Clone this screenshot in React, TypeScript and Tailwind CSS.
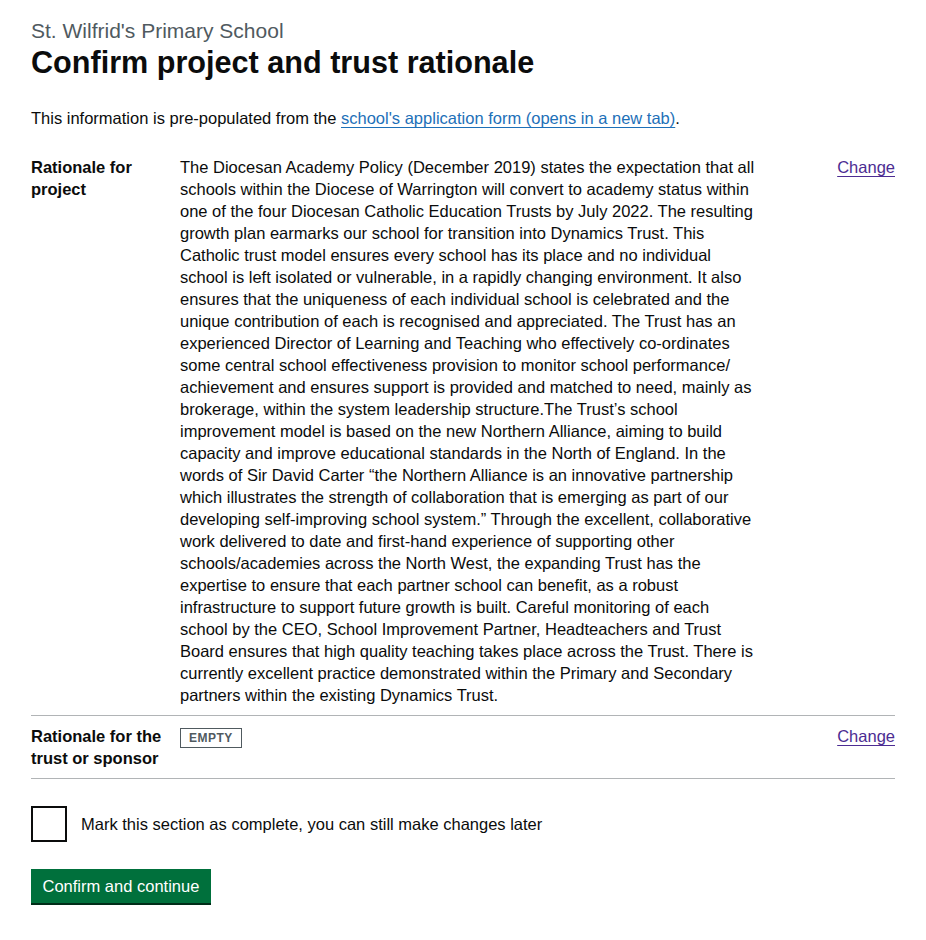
import React from "react";

const lines = [
  "The Diocesan Academy Policy (December 2019) states the expectation that all",
  "schools within the Diocese of Warrington will convert to academy status within",
  "one of the four Diocesan Catholic Education Trusts by July 2022. The resulting",
  "growth plan earmarks our school for transition into Dynamics Trust. This",
  "Catholic trust model ensures every school has its place and no individual",
  "school is left isolated or vulnerable, in a rapidly changing environment. It also",
  "ensures that the uniqueness of each individual school is celebrated and the",
  "unique contribution of each is recognised and appreciated. The Trust has an",
  "experienced Director of Learning and Teaching who effectively co-ordinates",
  "some central school effectiveness provision to monitor school performance/",
  "achievement and ensures support is provided and matched to need, mainly as",
  "brokerage, within the system leadership structure.The Trust\u2019s school",
  "improvement model is based on the new Northern Alliance, aiming to build",
  "capacity and improve educational standards in the North of England. In the",
  "words of Sir David Carter \u201cthe Northern Alliance is an innovative partnership",
  "which illustrates the strength of collaboration that is emerging as part of our",
  "developing self-improving school system.\u201d Through the excellent, collaborative",
  "work delivered to date and first-hand experience of supporting other",
  "schools/academies across the North West, the expanding Trust has the",
  "expertise to ensure that each partner school can benefit, as a robust",
  "infrastructure to support future growth is built. Careful monitoring of each",
  "school by the CEO, School Improvement Partner, Headteachers and Trust",
  "Board ensures that high quality teaching takes place across the Trust. There is",
  "currently excellent practice demonstrated within the Primary and Secondary",
  "partners within the existing Dynamics Trust.",
];

function ChangeLink() {
  return (
    <a
      href="#"
      className="text-[#4c2c92] underline underline-offset-[3px] decoration-1 whitespace-nowrap"
    >
      Change
    </a>
  );
}

export default function App() {
  return (
    <div className="min-h-[940px] bg-white px-[31px] pt-[18px] font-['Liberation_Sans',Arial,sans-serif] text-[#0b0c0c]">
      <span className="block text-[21px] leading-[26px] text-[#505a5f]">
        St. Wilfrid's Primary School
      </span>
      <h1 className="text-[30.6px] leading-[36px] font-bold">
        Confirm project and trust rationale
      </h1>
      <p className="mt-[27px] text-[16.5px] leading-[22px]">
        This information is pre-populated from the{" "}
        <a href="#" className="text-[#1d70b8] underline underline-offset-[3px] decoration-1">
          school's application form (opens in a new tab)
        </a>
        .
      </p>

      <dl className="mt-[18px] text-[16.5px] leading-[22px]">
        <div className="grid grid-cols-[149px_1fr_auto] border-b border-[#b1b4b6] pt-[9px] pb-[9px]">
          <dt className="font-bold whitespace-nowrap">
            Rationale for
            <br />
            project
          </dt>
          <dd className="whitespace-nowrap">
            {lines.map((l, i) => (
              <span key={i} className="block">
                {l}
              </span>
            ))}
          </dd>
          <dd className="text-right pl-[20px]">
            <ChangeLink />
          </dd>
        </div>
        <div className="grid grid-cols-[149px_1fr_auto] border-b border-[#b1b4b6] pt-[9px] pb-[9px]">
          <dt className="font-bold whitespace-nowrap">
            Rationale for the
            <br />
            trust or sponsor
          </dt>
          <dd>
            <span className="inline-block mt-[3px] border border-[#505a5f] px-[8px] py-[2px] text-[12px] leading-[14px] font-bold tracking-[0.5px] text-[#505a5f] align-top">
              EMPTY
            </span>
          </dd>
          <dd className="text-right pl-[20px]">
            <ChangeLink />
          </dd>
        </div>
      </dl>

      <div className="mt-[27px] flex items-center">
        <span className="block w-[36px] h-[36px] border-2 border-[#0b0c0c] bg-white shrink-0" />
        <span className="ml-[14px] text-[16.5px] leading-[22px]">
          Mark this section as complete, you can still make changes later
        </span>
      </div>

      <div className="mt-[27px]">
        <button className="h-[34px] px-[11.5px] bg-[#00703c] text-white text-[16.5px] leading-[22px] shadow-[0_2px_0_#002d18] font-['Liberation_Sans',Arial,sans-serif]">
          Confirm and continue
        </button>
      </div>
    </div>
  );
}
